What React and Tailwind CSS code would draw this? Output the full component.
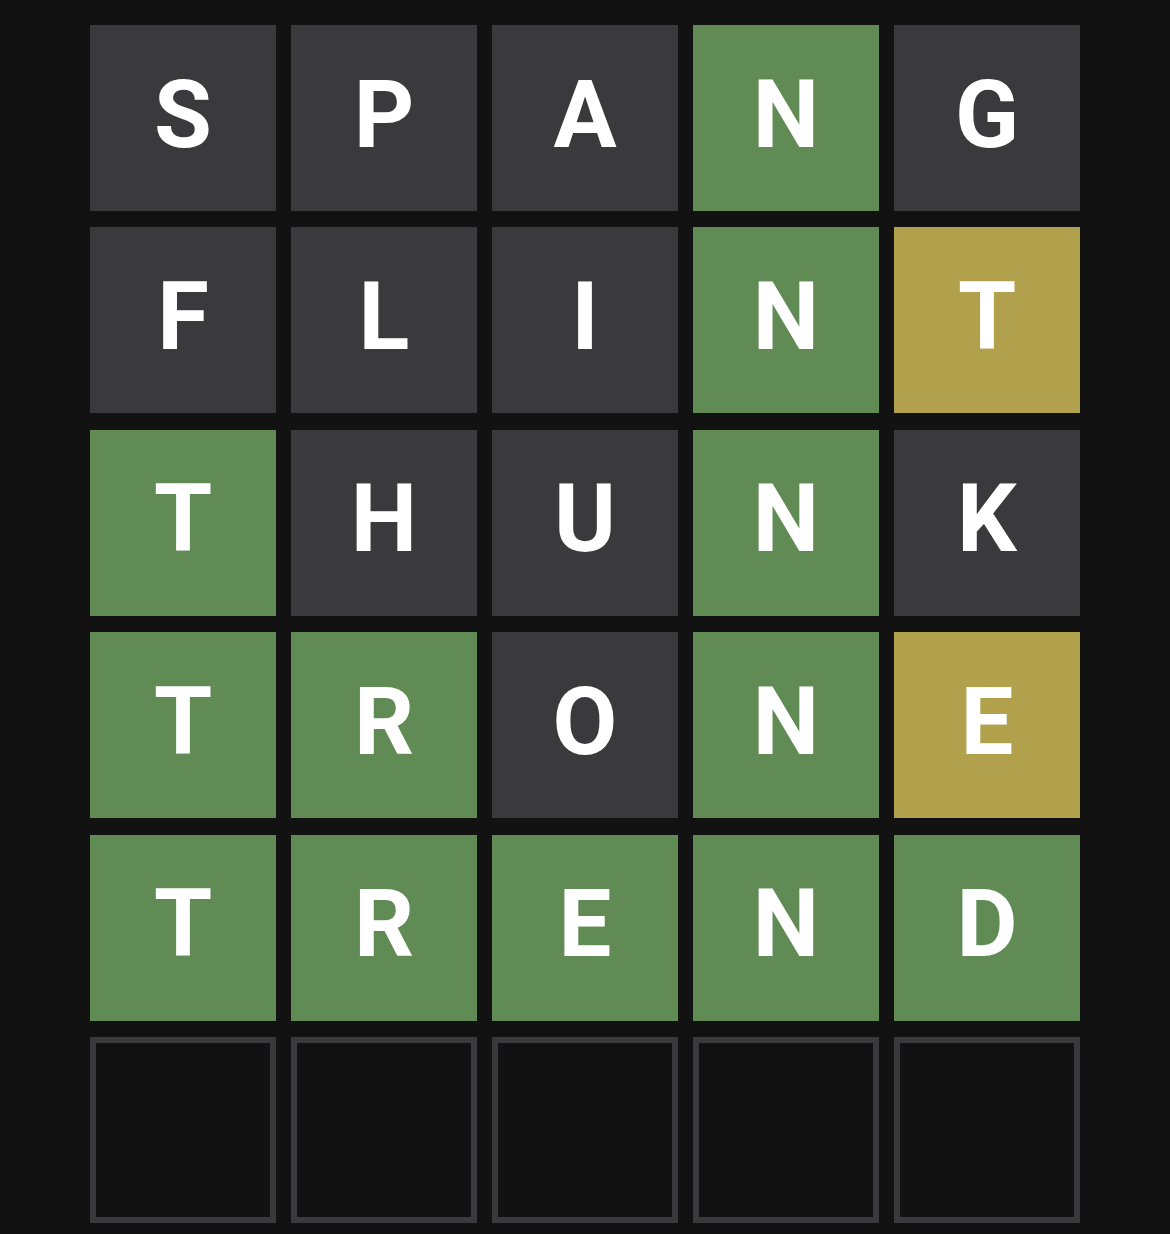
import React from "react";

const rows = [
  ["S", "P", "A", "N", "G"],
  ["F", "L", "I", "N", "T"],
  ["T", "H", "U", "N", "K"],
  ["T", "R", "O", "N", "E"],
  ["T", "R", "E", "N", "D"],
];

const states = [
  ["x", "x", "x", "g", "x"],
  ["x", "x", "x", "g", "y"],
  ["g", "x", "x", "g", "x"],
  ["g", "g", "x", "g", "y"],
  ["g", "g", "g", "g", "g"],
];

const colors = {
  g: "bg-[#608b55]",
  y: "bg-[#b1a04c]",
  x: "bg-[#3a3a3c]",
};

function Tile({ letter, state }) {
  if (!letter) {
    return <div className="h-[186px] border-[6px] border-[#3a3a3c] bg-[#121213]" />;
  }
  return (
    <div
      className={`h-[186px] flex items-center justify-center pb-[7px] text-white font-bold text-[94px] leading-none ${colors[state]}`}
    >
      {letter}
    </div>
  );
}

export default function App() {
  return (
    <div
      className="min-h-[1234px] w-full bg-[#121213] flex justify-center pt-[25px]"
      style={{ fontFamily: 'Roboto, "Liberation Sans", Arial, sans-serif' }}
    >
      <div className="w-[990px] grid grid-cols-5 gap-x-[15px] gap-y-[16.4px] content-start">
        {rows.map((row, r) =>
          row.map((l, c) => <Tile key={`${r}-${c}`} letter={l} state={states[r][c]} />)
        )}
        {[0, 1, 2, 3, 4].map((i) => (
          <Tile key={`e-${i}`} />
        ))}
      </div>
    </div>
  );
}
